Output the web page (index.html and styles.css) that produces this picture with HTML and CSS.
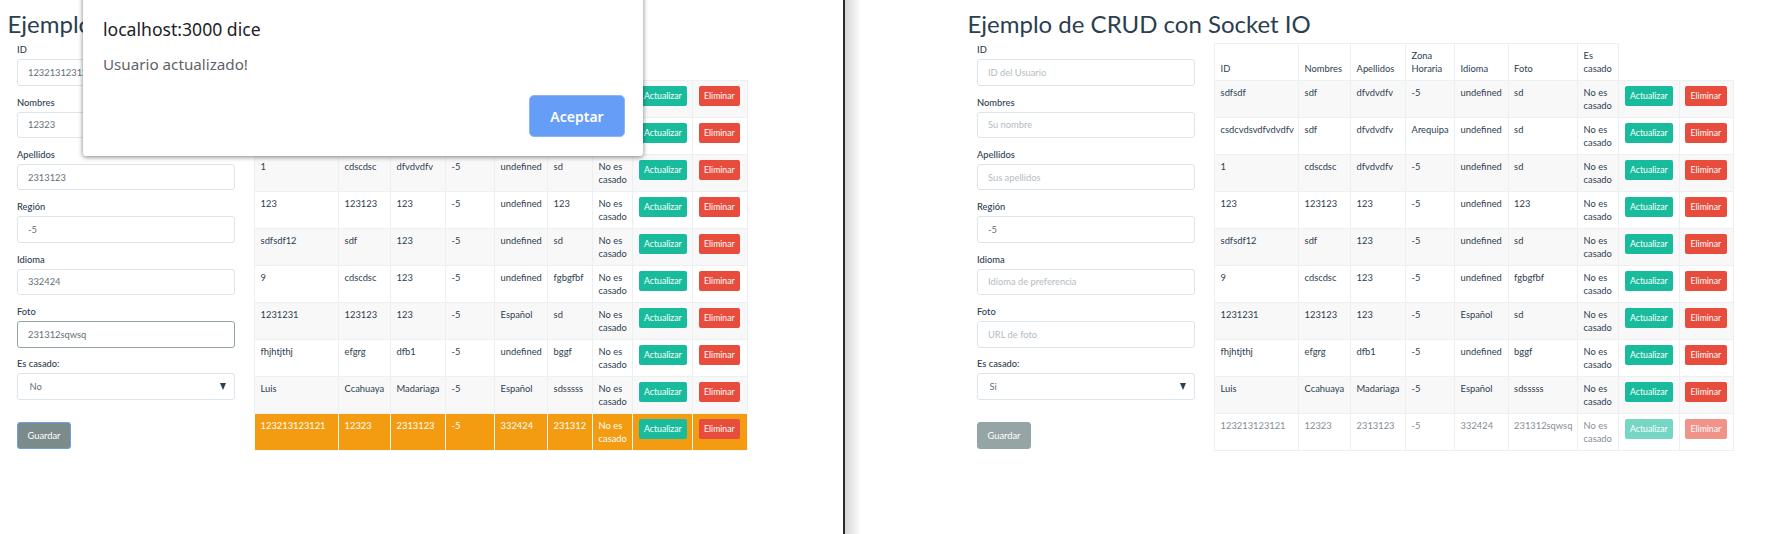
FILE: index.html
```html
<!DOCTYPE html>
<html lang="es">
  <head>
    <meta charset="utf-8">
    <title>Ejemplo de CRUD con Socket IO</title>
    <link rel="stylesheet" href="styles.css">
  </head>
  <body>
    <div class="pane pane-left">
      <div class="dialog">
        <p class="dialog-title">localhost:3000 dice</p>
        <p class="dialog-text">Usuario actualizado!</p>
        <div class="dialog-actions"><button class="dialog-btn">Aceptar</button></div>
      </div>
      <h1>Ejemplo de CRUD con Socket IO</h1>
      <div class="content">
        <form class="user-form">
          <div class="field"><label>ID</label><input class="input" value="123213123121"></div>
          <div class="field"><label>Nombres</label><input class="input" value="12323"></div>
          <div class="field"><label>Apellidos</label><input class="input" value="2313123"></div>
          <div class="field"><label>Región</label><input class="input" value="-5"></div>
          <div class="field"><label>Idioma</label><input class="input" value="332424"></div>
          <div class="field"><label>Foto</label><input class="input input-focus" value="231312sqwsq"></div>
          <div class="field"><label>Es casado:</label><div class="select-wrap"><select class="input select"><option>No</option></select></div></div>
          <button type="button" class="save save-focus">Guardar</button>
        </form>
        <table class="users users-left">
          <colgroup><col class="c1"><col class="c2"><col class="c3"><col class="c4"><col class="c5"><col class="c6"><col class="c7"><col class="c8"><col class="c9"></colgroup>
          <thead>
            <tr><th>ID</th><th>Nombres</th><th>Apellidos</th><th>Zona Horaria</th><th>Idioma</th><th>Foto</th><th>Es casado</th></tr>
          </thead>
          <tbody>
            <tr><td>sdfsdf</td><td>sdf</td><td>dfvdvdfv</td><td>-5</td><td>undefined</td><td>sd</td><td>No es casado</td><td><a class="btn btn-green">Actualizar</a></td><td><a class="btn btn-red">Eliminar</a></td></tr>
            <tr><td>csdcvdsvdfvdvdfv</td><td>sdf</td><td>dfvdvdfv</td><td>Arequipa</td><td>undefined</td><td>sd</td><td>No es casado</td><td><a class="btn btn-green">Actualizar</a></td><td><a class="btn btn-red">Eliminar</a></td></tr>
            <tr><td>1</td><td>cdscdsc</td><td>dfvdvdfv</td><td>-5</td><td>undefined</td><td>sd</td><td>No es casado</td><td><a class="btn btn-green">Actualizar</a></td><td><a class="btn btn-red">Eliminar</a></td></tr>
            <tr><td>123</td><td>123123</td><td>123</td><td>-5</td><td>undefined</td><td>123</td><td>No es casado</td><td><a class="btn btn-green">Actualizar</a></td><td><a class="btn btn-red">Eliminar</a></td></tr>
            <tr><td>sdfsdf12</td><td>sdf</td><td>123</td><td>-5</td><td>undefined</td><td>sd</td><td>No es casado</td><td><a class="btn btn-green">Actualizar</a></td><td><a class="btn btn-red">Eliminar</a></td></tr>
            <tr><td>9</td><td>cdscdsc</td><td>123</td><td>-5</td><td>undefined</td><td>fgbgfbf</td><td>No es casado</td><td><a class="btn btn-green">Actualizar</a></td><td><a class="btn btn-red">Eliminar</a></td></tr>
            <tr><td>1231231</td><td>123123</td><td>123</td><td>-5</td><td>Español</td><td>sd</td><td>No es casado</td><td><a class="btn btn-green">Actualizar</a></td><td><a class="btn btn-red">Eliminar</a></td></tr>
            <tr><td>fhjhtjthj</td><td>efgrg</td><td>dfb1</td><td>-5</td><td>undefined</td><td>bggf</td><td>No es casado</td><td><a class="btn btn-green">Actualizar</a></td><td><a class="btn btn-red">Eliminar</a></td></tr>
            <tr><td>Luis</td><td>Ccahuaya</td><td>Madariaga</td><td>-5</td><td>Español</td><td>sdsssss</td><td>No es casado</td><td><a class="btn btn-green">Actualizar</a></td><td><a class="btn btn-red">Eliminar</a></td></tr>
            <tr class="row-warning"><td>123213123121</td><td>12323</td><td>2313123</td><td>-5</td><td>332424</td><td>231312</td><td>No es casado</td><td><a class="btn btn-green">Actualizar</a></td><td><a class="btn btn-red">Eliminar</a></td></tr>
          </tbody>
        </table>
      </div>
    </div>
    <div class="pane pane-right">
      <h1>Ejemplo de CRUD con Socket IO</h1>
      <div class="content">
        <form class="user-form">
          <div class="field"><label>ID</label><input class="input" placeholder="ID del Usuario"></div>
          <div class="field"><label>Nombres</label><input class="input" placeholder="Su nombre"></div>
          <div class="field"><label>Apellidos</label><input class="input" placeholder="Sus apellidos"></div>
          <div class="field"><label>Región</label><input class="input" value="-5"></div>
          <div class="field"><label>Idioma</label><input class="input" placeholder="Idioma de preferencia"></div>
          <div class="field"><label>Foto</label><input class="input" placeholder="URL de foto"></div>
          <div class="field"><label>Es casado:</label><div class="select-wrap"><select class="input select"><option>Si</option></select></div></div>
          <button type="button" class="save">Guardar</button>
        </form>
        <table class="users users-right">
          <colgroup><col class="c1"><col class="c2"><col class="c3"><col class="c4"><col class="c5"><col class="c6"><col class="c7"><col class="c8"><col class="c9"></colgroup>
          <thead>
            <tr><th>ID</th><th>Nombres</th><th>Apellidos</th><th>Zona Horaria</th><th>Idioma</th><th>Foto</th><th>Es casado</th></tr>
          </thead>
          <tbody>
            <tr><td>sdfsdf</td><td>sdf</td><td>dfvdvdfv</td><td>-5</td><td>undefined</td><td>sd</td><td>No es casado</td><td><a class="btn btn-green">Actualizar</a></td><td><a class="btn btn-red">Eliminar</a></td></tr>
            <tr><td>csdcvdsvdfvdvdfv</td><td>sdf</td><td>dfvdvdfv</td><td>Arequipa</td><td>undefined</td><td>sd</td><td>No es casado</td><td><a class="btn btn-green">Actualizar</a></td><td><a class="btn btn-red">Eliminar</a></td></tr>
            <tr><td>1</td><td>cdscdsc</td><td>dfvdvdfv</td><td>-5</td><td>undefined</td><td>sd</td><td>No es casado</td><td><a class="btn btn-green">Actualizar</a></td><td><a class="btn btn-red">Eliminar</a></td></tr>
            <tr><td>123</td><td>123123</td><td>123</td><td>-5</td><td>undefined</td><td>123</td><td>No es casado</td><td><a class="btn btn-green">Actualizar</a></td><td><a class="btn btn-red">Eliminar</a></td></tr>
            <tr><td>sdfsdf12</td><td>sdf</td><td>123</td><td>-5</td><td>undefined</td><td>sd</td><td>No es casado</td><td><a class="btn btn-green">Actualizar</a></td><td><a class="btn btn-red">Eliminar</a></td></tr>
            <tr><td>9</td><td>cdscdsc</td><td>123</td><td>-5</td><td>undefined</td><td>fgbgfbf</td><td>No es casado</td><td><a class="btn btn-green">Actualizar</a></td><td><a class="btn btn-red">Eliminar</a></td></tr>
            <tr><td>1231231</td><td>123123</td><td>123</td><td>-5</td><td>Español</td><td>sd</td><td>No es casado</td><td><a class="btn btn-green">Actualizar</a></td><td><a class="btn btn-red">Eliminar</a></td></tr>
            <tr><td>fhjhtjthj</td><td>efgrg</td><td>dfb1</td><td>-5</td><td>undefined</td><td>bggf</td><td>No es casado</td><td><a class="btn btn-green">Actualizar</a></td><td><a class="btn btn-red">Eliminar</a></td></tr>
            <tr><td>Luis</td><td>Ccahuaya</td><td>Madariaga</td><td>-5</td><td>Español</td><td>sdsssss</td><td>No es casado</td><td><a class="btn btn-green">Actualizar</a></td><td><a class="btn btn-red">Eliminar</a></td></tr>
            <tr class="row-fading"><td>123213123121</td><td>12323</td><td>2313123</td><td>-5</td><td>332424</td><td>231312sqwsq</td><td>No es casado</td><td><a class="btn btn-green">Actualizar</a></td><td><a class="btn btn-red">Eliminar</a></td></tr>
          </tbody>
        </table>
      </div>
    </div>
  </body>
</html>
```

FILE: styles.css
```css
html, body {
    height: 100%;
}

body {
    margin: 0;
    display: flex;
    overflow: hidden;
    background: #fff;
    color: #2c3e50;
    font-family: "Lato", "Liberation Sans", sans-serif;
    font-size: 9.33px;
}

.pane {
    position: relative;
    height: 534px;
    box-sizing: border-box;
}

.pane-left {
    width: 844.5px;
    flex: none;
    padding-left: 8px;
    border-right: 2px solid #2b2b2b;
}

.pane-right {
    flex: 1;
    padding-left: 123.5px;
    background: linear-gradient(to right, #d4d4d4, #fff 16px);
}

h1 {
    margin: 0 0 0 -0.5px;
    height: 42.3px;
    padding-top: 7.5px;
    box-sizing: border-box;
    font-size: 24px;
    line-height: 31px;
    font-weight: 400;
}

.content {
    display: flex;
    align-items: flex-start;
    padding-left: 9px;
}

.user-form {
    width: 218px;
    flex: none;
    margin-right: 19px;
}

.field {
    margin-bottom: 8.85px;
}

label {
    display: block;
    height: 14px;
    line-height: 16.6px;
    margin-bottom: 3px;
    font-weight: 500;
}

.input {
    display: block;
    width: 100%;
    height: 26.5px;
    box-sizing: border-box;
    padding: 0 10px;
    border: 1.5px solid #dce4ec;
    border-radius: 3px;
    background: #fff;
    color: #5f6f78;
    font-family: inherit;
    font-size: 9.33px;
    outline: none;
}

.input::placeholder {
    color: #b4bcc2;
}

.input-focus {
    border-color: #95a5a6;
}

.select {
    appearance: none;
    padding-left: 11.5px;
}

.select-wrap {
    position: relative;
}

.select-wrap::after {
    content: "";
    position: absolute;
    right: 9px;
    top: 10px;
    border-left: 3.5px solid transparent;
    border-right: 3.5px solid transparent;
    border-top: 7px solid #2c3e50;
}

.save {
    display: block;
    width: 54px;
    height: 27px;
    margin-top: 22px;
    padding: 0;
    border: 1.5px solid #95a5a6;
    border-radius: 3px;
    background: #95a5a6;
    color: #fff;
    font-family: inherit;
    font-size: 9.33px;
}

.save-focus {
    background: #7b8a8b;
    border-color: #6ea0e8;
}

/* table */
.users {
    table-layout: fixed;
    border-collapse: collapse;
    margin-top: 0.7px;
    line-height: 13px;
}

.users th, .users td {
    padding: 5px 5.6px;
    border: 1px solid #ecf0f1;
    text-align: left;
    font-weight: 400;
}

.users th {
    vertical-align: bottom;
}

.users td {
    vertical-align: top;
    height: 26px;
}

.users tbody tr:nth-child(odd) {
    background: #f8f8f8;
}

.users-left { width: 493px; }
.users-left .c1 { width: 84px; }
.users-left .c2 { width: 52px; }
.users-left .c3 { width: 55px; }
.users-left .c4 { width: 49px; }
.users-left .c5 { width: 53px; }
.users-left .c6 { width: 45px; }
.users-left .c7 { width: 40px; }
.users-left .c8 { width: 60px; }
.users-left .c9 { width: 55px; }

.users-right { width: 518.5px; }
.users-right .c1 { width: 84px; }
.users-right .c2 { width: 52px; }
.users-right .c3 { width: 55px; }
.users-right .c4 { width: 49px; }
.users-right .c5 { width: 53.5px; }
.users-right .c6 { width: 69.5px; }
.users-right .c7 { width: 41px; }
.users-right .c8 { width: 60.5px; }
.users-right .c9 { width: 54px; }

.users tbody tr.row-warning {
    background: #f39c12;
    color: #fff;
}

.users .row-warning td {
    border-color: #f8f8f8;
}

.row-fading td {
    opacity: 0.6;
}

.btn {
    display: block;
    width: fit-content;
    height: 20px;
    padding: 0 5.5px;
    box-sizing: border-box;
    border-radius: 2px;
    color: #fff;
    font-size: 8.67px;
    line-height: 20px;
}

.btn-green {
    background: #18bc9c;
}

.btn-red {
    background: #e74c3c;
}

/* alert box on top of the left side */
.dialog {
    position: absolute;
    left: 82.7px;
    top: -10px;
    z-index: 2;
    width: 560.3px;
    height: 165.5px;
    box-sizing: border-box;
    padding: 27px 18px 18px 20.3px;
    background: #fff;
    border-radius: 0 0 3px 3px;
    box-shadow: 0 1px 5px rgba(0, 0, 0, 0.5);
    font-family: "Noto Sans", sans-serif;
}

.dialog p {
    margin: 0;
}

.dialog-title {
    font-size: 17.6px;
    line-height: 24px;
    color: #202124;
}

.dialog .dialog-text {
    margin-top: 13px;
    font-size: 15.2px;
    line-height: 20px;
    color: #5f6368;
}

.dialog-actions {
    display: flex;
    justify-content: flex-end;
    margin-top: 21px;
}

.dialog-btn {
    width: 96px;
    height: 42px;
    border: 1px solid #8fb3f5;
    border-radius: 5px;
    background: #669df6;
    color: #fff;
    font-family: inherit;
    font-size: 14px;
    font-weight: 600;
}
```
